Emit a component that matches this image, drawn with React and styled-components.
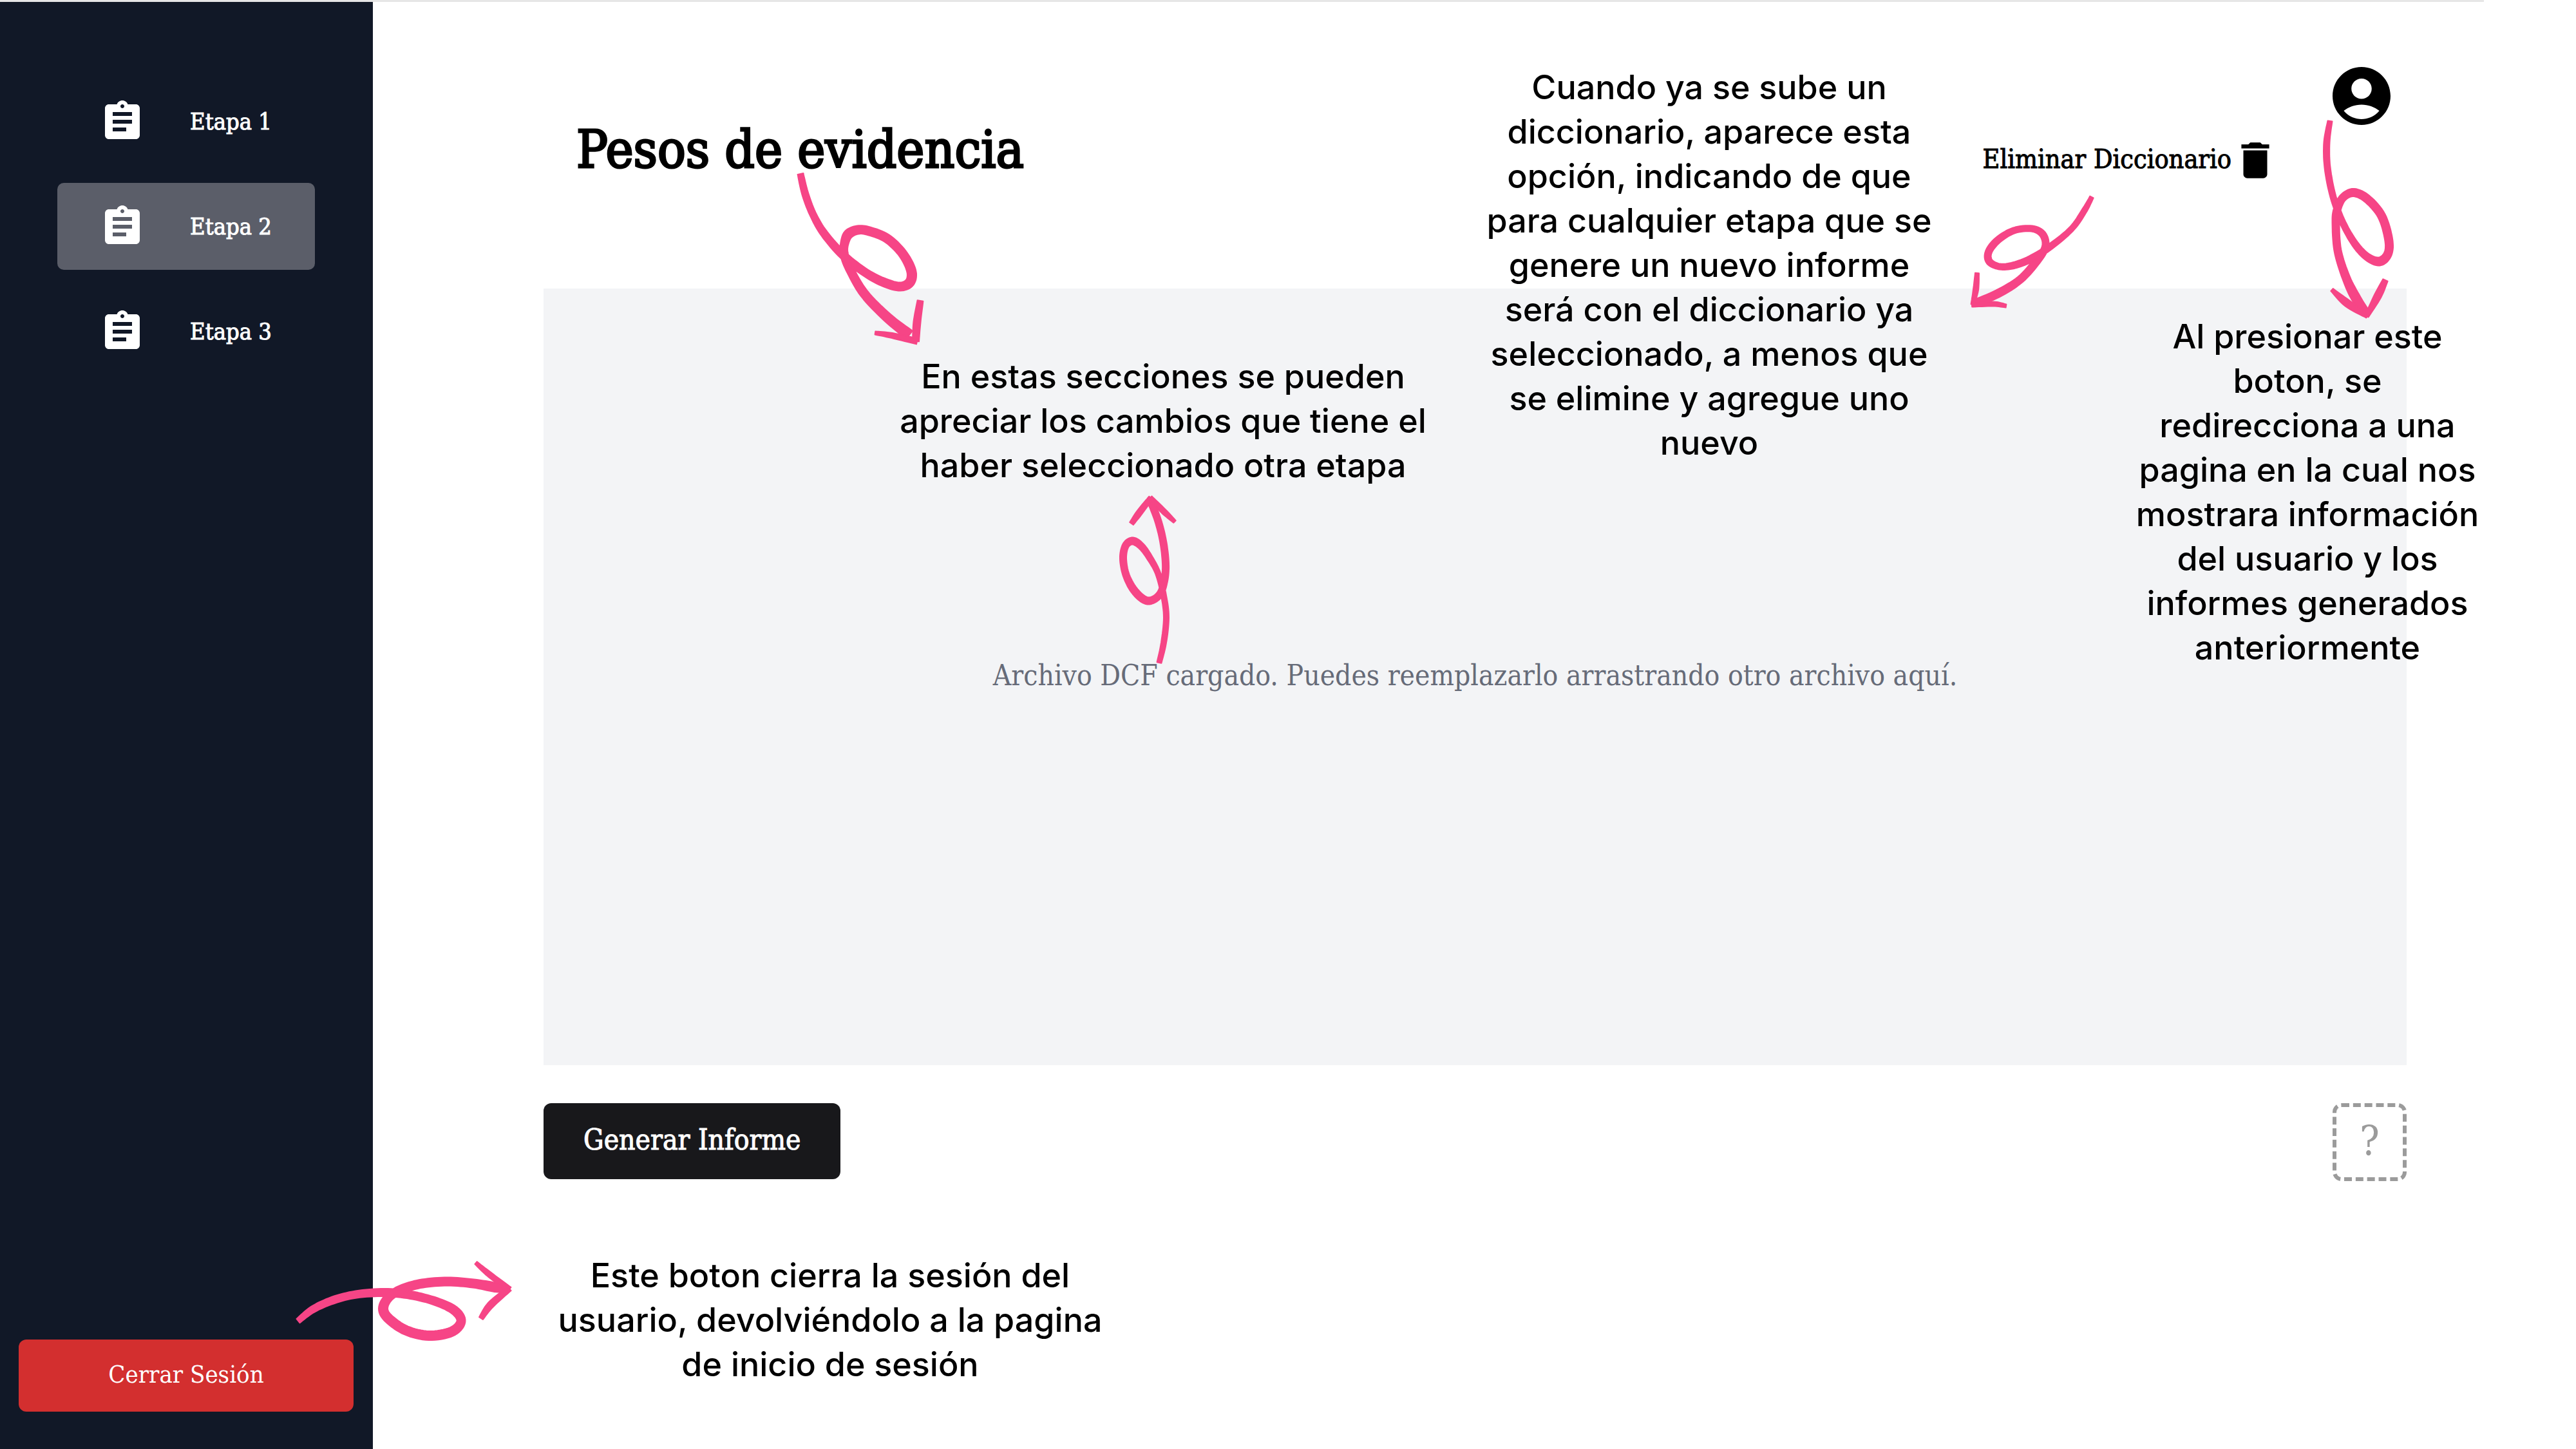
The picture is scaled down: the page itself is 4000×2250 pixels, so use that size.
import React from "react";
import styled, { createGlobalStyle } from "styled-components";
import { MdAssignment, MdDelete } from "react-icons/md";

const GlobalStyle = createGlobalStyle`
  *, *::before, *::after { box-sizing: border-box; }
  body {
    margin: 0;
    background: #fff;
    color: #000;
    font-family: "DejaVu Serif Condensed", "DejaVu Serif", serif;
  }
  button { font-family: inherit; cursor: pointer; }
`;

const TopRule = styled.div`
  height: 3px;
  margin-right: 143px;
  background: #e6e6e6;
`;

const Page = styled.div`
  position: relative;
  display: flex;
  min-height: calc(100vh - 3px);
  overflow: hidden;
`;

const Sidebar = styled.aside`
  flex: none;
  width: 579px;
  display: flex;
  flex-direction: column;
  justify-content: space-between;
  padding: 118px 30px 58px 29px;
  background: #111827;
`;

const StageList = styled.nav`
  display: flex;
  flex-direction: column;
  gap: 28px;
  padding: 0 60px;
`;

const StageButton = styled.button`
  display: flex;
  align-items: center;
  gap: 69px;
  height: 135px;
  padding: 0 65px;
  border: 0;
  border-radius: 10px;
  background: ${(p) => (p.$active ? "#5b5e69" : "transparent")};
  color: #fff;
  font-size: 36px;
  line-height: 48px;
  -webkit-text-stroke: 1px currentColor;
`;

const StageIcon = styled(MdAssignment)`
  width: 72px;
  height: 72px;
  stroke: none;
`;

const LogoutButton = styled.button`
  height: 112px;
  padding: 0 0 4px;
  border: 0;
  border-radius: 12px;
  background: #d32f2f;
  color: #fff;
  font-size: 38px;
  line-height: 48px;
`;

const Main = styled.main`
  flex: 1;
  min-width: 0;
  display: flex;
  flex-direction: column;
  padding: 101px 263px 0 265px;
`;

const Header = styled.header`
  display: flex;
  align-items: flex-start;
  justify-content: space-between;
  height: 344px;
  padding: 0 25px 0 51px;
`;

const Title = styled.h1`
  margin: 76px 0 0;
  font-size: 81px;
  line-height: 104px;
  font-weight: 400;
  -webkit-text-stroke: 3px #000;
`;

const HeaderActions = styled.div`
  display: flex;
  align-items: flex-start;
  gap: 83px;
`;

const DeleteButton = styled.button`
  display: flex;
  align-items: center;
  margin-top: 108px;
  padding: 0;
  border: 0;
  background: none;
  color: #000;
  font-size: 41px;
  line-height: 48px;
  -webkit-text-stroke: 1px currentColor;
`;

const DeleteLabel = styled.span`
  padding-bottom: 4px;
`;

const ProfileButton = styled.button`
  display: flex;
  padding: 0;
  border: 0;
  border-radius: 50%;
  background: none;
  color: #000;
`;

const DropZone = styled.section`
  display: flex;
  align-items: center;
  justify-content: center;
  height: 1206px;
  padding-bottom: 4px;
  background: #f3f4f6;
  color: #666b78;
  font-size: 44px;
  line-height: 56px;
`;

const DropText = styled.p`
  margin: 0;
`;

const Footer = styled.footer`
  display: flex;
  align-items: flex-start;
  justify-content: space-between;
  padding-top: 59px;
`;

const ReportButton = styled.button`
  height: 118px;
  padding: 0 62px 4px;
  border: 0;
  border-radius: 12px;
  background: #18181b;
  color: #fff;
  font-size: 44px;
  line-height: 56px;
  -webkit-text-stroke: 1px currentColor;
`;

const HelpButton = styled.button`
  width: 115px;
  height: 121px;
  padding: 0 0 4px;
  border: 6px dashed #9b9b9b;
  border-radius: 14px;
  background: none;
  color: #9b9b9b;
  font-size: 64px;
  line-height: 80px;
`;

/* Notes and arrows float over the screen they explain. */
const Note = styled.p`
  position: absolute;
  top: ${(p) => p.$top}px;
  left: ${(p) => p.$left}px;
  width: ${(p) => p.$width}px;
  margin: 0;
  font-family: Inter, "Noto Sans", sans-serif;
  font-size: 52px;
  font-weight: 500;
  line-height: 69px;
  text-align: center;
`;

const ArrowSvg = styled.svg`
  position: absolute;
  top: ${(p) => p.$top}px;
  left: ${(p) => p.$left}px;
  fill: #f64586;
  stroke: #f64586;
  stroke-width: 2;
  stroke-linejoin: round;
  overflow: visible;
  pointer-events: none;
`;

/* Builds a brush stroke of varying thickness through [x, y, thickness] points. */
function brush(points) {
  const at = (i) => points[Math.max(0, Math.min(points.length - 1, i))];
  const samples = [];
  for (let i = 0; i < points.length - 1; i++) {
    for (let s = 0; s < 8; s++) {
      const t = s / 8;
      samples.push(
        [0, 1, 2].map((k) => {
          const [a, b, c, d] = [at(i - 1)[k], at(i)[k], at(i + 1)[k], at(i + 2)[k]];
          return (
            0.5 *
            (2 * b + (c - a) * t + (2 * a - 5 * b + 4 * c - d) * t * t + (3 * b - a - 3 * c + d) * t * t * t)
          );
        })
      );
    }
  }
  samples.push(at(points.length - 1));
  const left = [];
  const right = [];
  samples.forEach(([x, y, w], i) => {
    const p = samples[Math.max(0, i - 1)];
    const n = samples[Math.min(samples.length - 1, i + 1)];
    const len = Math.hypot(n[0] - p[0], n[1] - p[1]) || 1;
    const nx = (-(n[1] - p[1]) / len) * (w / 2);
    const ny = ((n[0] - p[0]) / len) * (w / 2);
    left.push(`${(x + nx).toFixed(1)} ${(y + ny).toFixed(1)}`);
    right.unshift(`${(x - nx).toFixed(1)} ${(y - ny).toFixed(1)}`);
  });
  return `M${left.concat(right).join("L")}Z`;
}

function Arrow({ top, left, width, height, strokes }) {
  return (
    <ArrowSvg
      $top={top - 3}
      $left={left}
      width={width}
      height={height}
      viewBox={`${left} ${top} ${width} ${height}`}
      aria-hidden="true"
    >
      {strokes.map((points, i) => (
        <path key={i} d={brush(points)} />
      ))}
    </ArrowSvg>
  );
}

const arrows = [
  {
    top: 265, left: 1235, width: 200, height: 275,
    strokes: [
      [[1243, 270, 9], [1250, 300, 10], [1262, 332, 10], [1280, 363, 11], [1310, 397, 12], [1345, 424, 12], [1374, 439, 13], [1398, 445, 13], [1413, 438, 14], [1415, 420, 14], [1401, 393, 13], [1377, 370, 13], [1350, 359, 13], [1332, 357, 13], [1317, 364, 14], [1311, 380, 12], [1311, 395, 12], [1319, 417, 12], [1342, 456, 13], [1378, 493, 14], [1412, 520, 16]],
      [[1359, 517, 5], [1385, 521, 8], [1424, 530, 9]],
      [[1429, 467, 9], [1424, 500, 11], [1422, 530, 10]],
    ],
  },
  {
    top: 765, left: 1735, width: 100, height: 270,
    strokes: [
      [[1800, 1029, 7], [1807, 998, 8], [1811, 959, 8], [1807, 925, 8], [1798, 890, 8], [1784, 864, 9], [1772, 848, 10], [1759, 840, 11], [1748, 847, 10], [1744, 867, 10], [1749, 894, 10], [1763, 919, 11], [1782, 933, 11], [1800, 924, 10], [1808, 902, 10], [1810, 875, 10], [1806, 840, 10], [1798, 808, 10], [1787, 779, 10]],
      [[1757, 813, 7], [1770, 795, 9], [1787, 773, 7]],
      [[1824, 810, 5], [1807, 794, 8], [1786, 773, 7]],
    ],
  },
  {
    top: 300, left: 3055, width: 200, height: 185,
    strokes: [
      [[3248, 306, 6], [3236, 328, 8], [3217, 355, 8], [3185, 382, 9], [3153, 402, 10], [3127, 412, 10], [3105, 414, 9], [3089, 406, 10], [3088, 391, 10], [3102, 373, 10], [3127, 358, 9], [3155, 355, 9], [3172, 364, 10], [3176, 383, 10], [3163, 405, 11], [3137, 434, 11], [3102, 456, 12], [3066, 471, 11]],
      [[3070, 424, 6], [3068, 450, 8], [3063, 473, 5]],
      [[3115, 475, 5], [3095, 472, 7], [3062, 474, 5]],
    ],
  },
  {
    top: 180, left: 3605, width: 115, height: 320,
    strokes: [
      [[3618, 188, 7], [3613, 221, 9], [3614, 260, 9], [3623, 306, 9], [3638, 346, 9], [3657, 379, 10], [3676, 399, 11], [3695, 406, 13], [3708, 394, 12], [3709, 371, 12], [3698, 335, 12], [3676, 309, 12], [3655, 299, 12], [3638, 307, 11], [3629, 326, 11], [3627, 346, 11], [3630, 389, 11], [3643, 431, 12], [3659, 464, 14], [3675, 486, 10]],
      [[3621, 450, 5], [3645, 471, 11], [3676, 491, 6]],
      [[3704, 435, 8], [3692, 460, 11], [3675, 491, 6]],
    ],
  },
  {
    top: 1955, left: 455, width: 345, height: 130,
    strokes: [
      [[463, 2051, 8], [486, 2033, 10], [517, 2019, 11], [553, 2010, 11], [597, 2007, 12], [638, 2011, 12], [677, 2021, 12], [706, 2035, 13], [716, 2052, 13], [701, 2068, 14], [666, 2074, 14], [631, 2066, 14], [604, 2048, 14], [595, 2032, 14], [604, 2014, 13], [626, 2001, 13], [656, 1993, 13], [695, 1990, 13], [735, 1993, 13], [769, 1999, 14], [790, 2003, 8]],
      [[739, 1961, 5], [760, 1979, 8], [791, 2002, 8]],
      [[747, 2047, 7], [762, 2026, 10], [791, 2001, 8]],
    ],
  },
];

const stages = ["Etapa 1", "Etapa 2", "Etapa 3"];

export default function App() {
  return (
    <>
      <GlobalStyle />
      <TopRule />
      <Page>
        <Sidebar>
          <StageList aria-label="Etapas">
            {stages.map((name) => (
              <StageButton key={name} type="button" $active={name === "Etapa 2"}>
                <StageIcon />
                {name}
              </StageButton>
            ))}
          </StageList>
          <LogoutButton type="button">Cerrar Sesión</LogoutButton>
        </Sidebar>

        <Main>
          <Header>
            <Title>Pesos de evidencia</Title>
            <HeaderActions>
              <DeleteButton type="button">
                <DeleteLabel>Eliminar Diccionario</DeleteLabel>
                <MdDelete size={74} />
              </DeleteButton>
              <ProfileButton type="button" aria-label="Perfil">
                <svg width="90" height="90" viewBox="2 2 20 20" fill="currentColor">
                  <path d="M12 2C6.48 2 2 6.48 2 12s4.48 10 10 10 10-4.48 10-10S17.52 2 12 2zm0 4c1.93 0 3.5 1.57 3.5 3.5S13.93 13 12 13s-3.5-1.57-3.5-3.5S10.07 6 12 6zm0 14c-2.03 0-4.43-.82-6.14-2.88C7.55 15.8 9.68 15 12 15s4.45.8 6.14 2.12C16.43 19.18 14.03 20 12 20z" />
                </svg>
              </ProfileButton>
            </HeaderActions>
          </Header>

          <DropZone>
            <DropText>Archivo DCF cargado. Puedes reemplazarlo arrastrando otro archivo aquí.</DropText>
          </DropZone>

          <Footer>
            <ReportButton type="button">Generar Informe</ReportButton>
            <HelpButton type="button">?</HelpButton>
          </Footer>
        </Main>

        <Note $top={547} $left={1386} $width={840}>
          En estas secciones se pueden apreciar los cambios que tiene el haber seleccionado otra etapa
        </Note>
        <Note $top={98} $left={2299} $width={710}>
          Cuando ya se sube un diccionario, aparece esta opción, indicando de que para cualquier etapa que se
          genere un nuevo informe será con el diccionario ya seleccionado, a menos que se elimine y agregue uno
          nuevo
        </Note>
        <Note $top={485} $left={3308} $width={550}>
          Al presionar este boton, se redirecciona a una pagina en la cual nos mostrara información del usuario y
          los informes generados anteriormente
        </Note>
        <Note $top={1943} $left={854} $width={870}>
          Este boton cierra la sesión del usuario, devolviéndolo a la pagina de inicio de sesión
        </Note>

        {arrows.map((arrow) => (
          <Arrow key={arrow.left} {...arrow} />
        ))}
      </Page>
    </>
  );
}
